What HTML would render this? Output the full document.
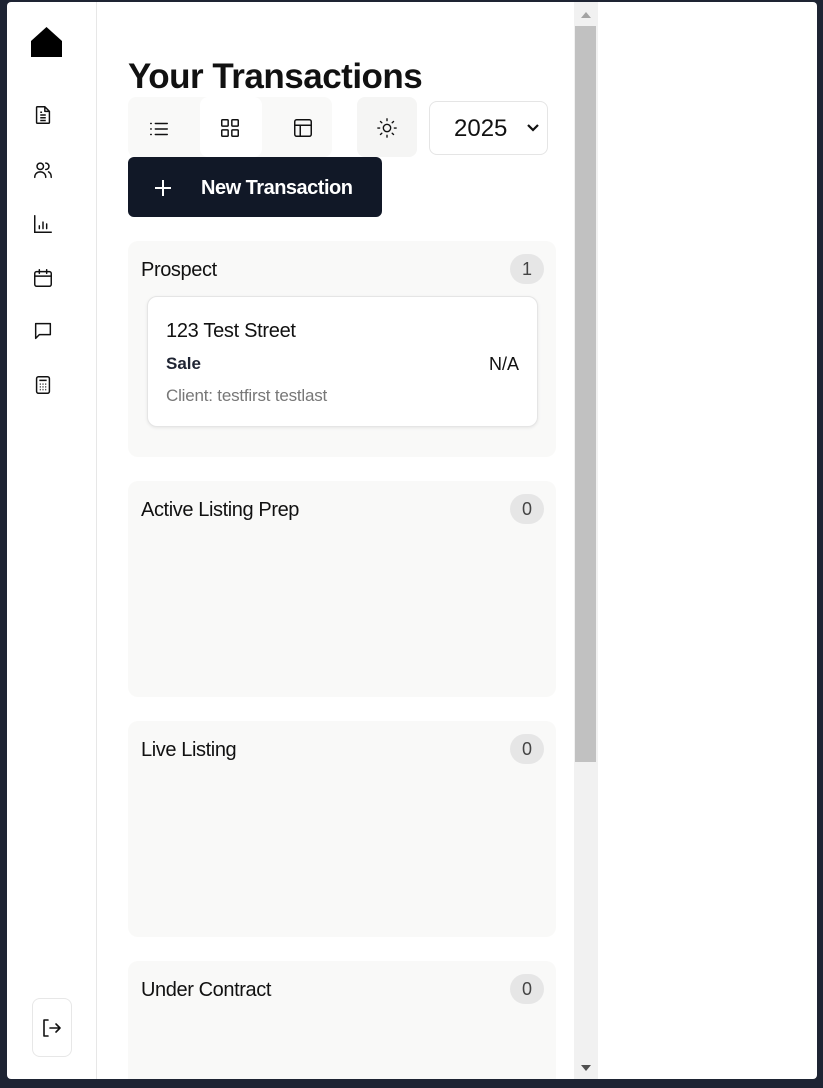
<!DOCTYPE html>
<html style="overflow:hidden"><head><style>
*{box-sizing:border-box;margin:0;padding:0}
html,body{width:823px;height:1088px;overflow:hidden}
body{background:#1e2433;font-family:"Liberation Sans",sans-serif;position:relative;color:#111}
.panel{position:absolute;left:7px;top:2px;width:810px;height:1077px;background:#fff;border-radius:4px;overflow:hidden}
.side{position:absolute;left:0;top:0;width:90px;height:100%;border-right:1px solid #e7e7e7}
.ic{position:absolute;left:25px;width:22px;height:22px}
svg{display:block}
.abs{position:absolute}
.col{position:absolute;left:121px;width:428px;height:216px;background:#f9f9f8;border-radius:10px}
.col h3{position:absolute;left:13px;top:18px;font-size:20px;font-weight:normal;color:#111;letter-spacing:-0.4px}
.badge{position:absolute;right:12px;top:13px;width:34px;height:30px;border-radius:15px;background:#e6e6e6;font-size:18px;color:#444;text-align:center;line-height:31px}
</style></head><body>
<div class="panel">
<div class="side">
 <svg class="abs" style="left:23px;top:24px" width="33" height="32" viewBox="0 0 33 32"><path d="M16.5 1 L32 15 V31 H1 V15 Z" fill="#000"/></svg>
 <svg class="ic" style="top:102px" viewBox="0 0 24 24" fill="none" stroke="#111" stroke-width="1.6" stroke-linejoin="round"><path d="M6 3h8l5 5v12a1 1 0 0 1-1 1H6a1 1 0 0 1-1-1V4a1 1 0 0 1 1-1z"/><path d="M14 3v5h5M9 12h6M9 15h6M9 18h6M9 9h2"/></svg>
 <svg class="ic" style="top:157px" viewBox="0 0 24 24" fill="none" stroke="#111" stroke-width="1.6" stroke-linecap="round"><circle cx="9" cy="8" r="3.5"/><path d="M3 20c0-4 3-6 6-6s6 2 6 6M15 4.5a3.5 3.5 0 0 1 0 7M18 14c2 1 3 3 3 6"/></svg>
 <svg class="ic" style="top:211px" viewBox="0 0 24 24" fill="none" stroke="#111" stroke-width="1.6" stroke-linecap="round"><path d="M3 3v18h18M8 17v-3M12 17v-7M16 17v-5"/></svg>
 <svg class="ic" style="top:265px" viewBox="0 0 24 24" fill="none" stroke="#111" stroke-width="1.6" stroke-linecap="round"><rect x="3" y="5" width="18" height="16" rx="2"/><path d="M8 3v4M16 3v4M3 10h18"/></svg>
 <svg class="ic" style="top:318px" viewBox="0 0 24 24" fill="none" stroke="#111" stroke-width="1.6" stroke-linejoin="round"><path d="M4 4h16v12H8l-4 4z"/></svg>
 <svg class="ic" style="top:372px" viewBox="0 0 24 24" fill="none" stroke="#111" stroke-width="1.6"><rect x="5" y="3" width="14" height="18" rx="2"/><path d="M8 7h8M8.5 11h1M11.5 11h1M14.5 11h1M8.5 14h1M11.5 14h1M14.5 14h1M8.5 17h1M11.5 17h1M14.5 17h1"/></svg>
 <div class="abs" style="left:25px;top:996px;width:40px;height:59px;border:1px solid #e7e7e7;border-radius:8px"></div>
 <svg class="abs" style="left:33px;top:1014px" width="24" height="24" viewBox="0 0 24 24" fill="none" stroke="#111" stroke-width="1.6" stroke-linecap="round" stroke-linejoin="round"><path d="M8 4H4v16h4M10 12h10M16 8l4 4-4 4"/></svg>
</div>
<div class="abs" style="left:121px;top:51px;font-size:35px;font-weight:bold;letter-spacing:-0.5px;line-height:48px">Your Transactions</div>
<div class="abs" style="left:121px;top:95px;width:204px;height:60px;background:#f9f9f8;border-radius:8px"></div>
<div class="abs" style="left:193px;top:95px;width:62px;height:60px;background:#fff;border-radius:8px"></div>
<svg class="abs" style="left:141px;top:116px" width="22" height="22" viewBox="0 0 24 24" fill="none" stroke="#111" stroke-width="1.6" stroke-linecap="round"><path d="M8 6h13M8 12h13M8 18h13M3 6h.5M3 12h.5M3 18h.5"/></svg>
<svg class="abs" style="left:212px;top:115px" width="22" height="22" viewBox="0 0 24 24" fill="none" stroke="#111" stroke-width="1.6"><rect x="3" y="3" width="7" height="7" rx="1"/><rect x="14" y="3" width="7" height="7" rx="1"/><rect x="3" y="14" width="7" height="7" rx="1"/><rect x="14" y="14" width="7" height="7" rx="1"/></svg>
<svg class="abs" style="left:285px;top:115px" width="22" height="22" viewBox="0 0 24 24" fill="none" stroke="#111" stroke-width="1.6"><rect x="3" y="3" width="18" height="18" rx="2"/><path d="M3 9h18M9 9v12"/></svg>
<div class="abs" style="left:350px;top:95px;width:60px;height:60px;background:#f5f5f4;border-radius:8px"></div>
<svg class="abs" style="left:369px;top:115px" width="22" height="22" viewBox="0 0 24 24" fill="none" stroke="#111" stroke-width="1.5" stroke-linecap="round"><circle cx="12" cy="12" r="4"/><path d="M12 2v2M12 20v2M4.9 4.9l1.4 1.4M17.7 17.7l1.4 1.4M2 12h2M20 12h2M4.9 19.1l1.4-1.4M17.7 6.3l1.4-1.4"/></svg>
<div class="abs" style="left:422px;top:99px;width:119px;height:54px;border:1px solid #e5e5e5;border-radius:8px;font-size:24px;line-height:54px;padding-left:24px;color:#111">2025</div>
<svg class="abs" style="left:519px;top:120px" width="14" height="12" viewBox="0 0 14 12" fill="none" stroke="#111" stroke-width="2.2"><path d="M2 3l5 5 5-5"/></svg>
<div class="abs" style="left:121px;top:155px;width:254px;height:60px;background:#111827;border-radius:6px;color:#fff;font-size:20px;font-weight:bold;line-height:62px;padding-left:73px;letter-spacing:-0.5px">New Transaction</div>
<svg class="abs" style="left:147px;top:177px" width="18" height="18" viewBox="0 0 18 18" stroke="#fff" stroke-width="2"><path d="M9 1v16M1 9h16"/></svg>

<div class="col" style="top:239px"><h3>Prospect</h3><div class="badge">1</div>
 <div class="abs" style="left:19px;top:55px;width:391px;height:131px;background:#fff;border:1px solid #e5e5e5;border-radius:10px;box-shadow:0 1px 3px rgba(0,0,0,.08)">
  <div class="abs" style="left:18px;top:23px;font-size:20px;color:#111;letter-spacing:-0.3px">123 Test Street</div>
  <div class="abs" style="left:18px;top:57px;font-size:17px;font-weight:bold;color:#1f2433">Sale</div>
  <div class="abs" style="right:18px;top:57px;font-size:18px;color:#111">N/A</div>
  <div class="abs" style="left:18px;top:89px;font-size:17px;color:#777;letter-spacing:-0.2px">Client: testfirst testlast</div>
 </div>
</div>
<div class="col" style="top:479px"><h3>Active Listing Prep</h3><div class="badge">0</div></div>
<div class="col" style="top:719px"><h3>Live Listing</h3><div class="badge">0</div></div>
<div class="col" style="top:959px"><h3>Under Contract</h3><div class="badge">0</div></div>

<div class="abs" style="left:567px;top:0;width:24px;height:1077px;background:#f1f1f1"></div>
<div class="abs" style="left:568px;top:24px;width:21px;height:736px;background:#c1c1c1"></div>
<svg class="abs" style="left:573px;top:8px" width="12" height="10"><path d="M1 8L6 2l5 6z" fill="#a3a3a3"/></svg>
<svg class="abs" style="left:573px;top:1061px" width="12" height="10"><path d="M1 2h10L6 8z" fill="#505050"/></svg>
</div>
</body></html>
